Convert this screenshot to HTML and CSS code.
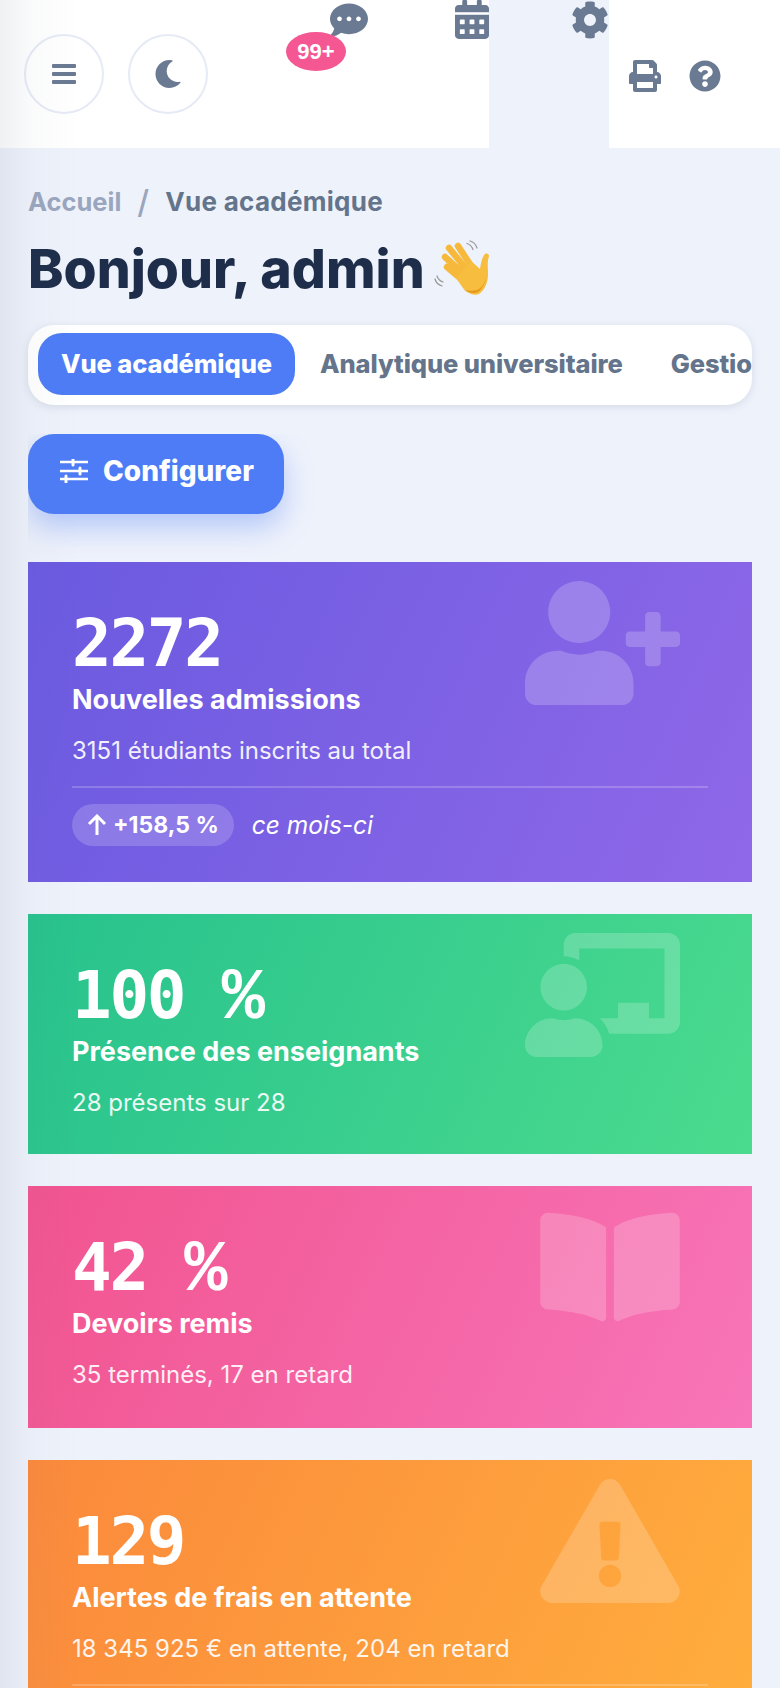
FILE: index.html
```html
<!DOCTYPE html>
<html lang="fr">
<head>
    <meta charset="UTF-8">
    <meta name="viewport" content="width=device-width, initial-scale=1.0">
    <title>Vue académique</title>
    <link rel="stylesheet" href="styles.css">
</head>
<body>
    <div class="edge-shadow"></div>
    <header class="topbar">
        <button class="round-btn first" aria-label="Menu">
            <svg class="bars" viewBox="0 0 24 20"><rect y="0" width="24" height="4" rx="1"/><rect y="8" width="24" height="4" rx="1"/><rect y="16" width="24" height="4" rx="1"/></svg>
        </button>
        <button class="round-btn" aria-label="Mode sombre">
            <svg class="moon" viewBox="0 0 512 512"><path d="M283.211 512c78.962 0 151.079-35.925 198.857-94.792 7.068-8.708-.639-21.43-11.562-19.35-124.203 23.654-238.262-71.576-238.262-196.954 0-72.222 38.662-138.635 101.498-174.394 9.686-5.512 7.25-20.197-3.756-22.23A258.156 258.156 0 0 0 283.211 0c-141.309 0-256 114.511-256 256 0 141.309 114.511 256 256 256z"/></svg>
        </button>
        <div class="chat">
            <svg class="chat-icon" viewBox="0 0 512 512"><path d="M256 32C114.6 32 0 125.1 0 240c0 49.6 21.4 95 57 130.7C44.5 421.1 2.7 466 2.2 466.5c-2.2 2.3-2.8 5.7-1.5 8.7S4.8 480 8 480c66.3 0 116-31.8 140.6-51.4 32.7 12.3 69 19.4 107.4 19.4 141.4 0 256-93.1 256-208S397.4 32 256 32zM128 272c-17.7 0-32-14.3-32-32s14.3-32 32-32 32 14.3 32 32-14.3 32-32 32zm128 0c-17.7 0-32-14.3-32-32s14.3-32 32-32 32 14.3 32 32-14.3 32-32 32zm128 0c-17.7 0-32-14.3-32-32s14.3-32 32-32 32 14.3 32 32-14.3 32-32 32z"/></svg>
            <span class="badge">99+</span>
        </div>
        <svg class="calendar" viewBox="0 0 448 512"><path d="M0 464c0 26.5 21.5 48 48 48h352c26.5 0 48-21.5 48-48V192H0v272zm320-196c0-6.6 5.4-12 12-12h40c6.6 0 12 5.4 12 12v40c0 6.6-5.4 12-12 12h-40c-6.6 0-12-5.4-12-12v-40zm0 128c0-6.6 5.4-12 12-12h40c6.6 0 12 5.4 12 12v40c0 6.6-5.4 12-12 12h-40c-6.6 0-12-5.4-12-12v-40zM192 268c0-6.6 5.4-12 12-12h40c6.6 0 12 5.4 12 12v40c0 6.6-5.4 12-12 12h-40c-6.6 0-12-5.4-12-12v-40zm0 128c0-6.6 5.4-12 12-12h40c6.6 0 12 5.4 12 12v40c0 6.6-5.4 12-12 12h-40c-6.6 0-12-5.4-12-12v-40zM64 268c0-6.6 5.4-12 12-12h40c6.6 0 12 5.4 12 12v40c0 6.6-5.4 12-12 12H76c-6.6 0-12-5.4-12-12v-40zm0 128c0-6.6 5.4-12 12-12h40c6.6 0 12 5.4 12 12v40c0 6.6-5.4 12-12 12H76c-6.6 0-12-5.4-12-12v-40zM400 64h-48V16c0-8.8-7.2-16-16-16h-32c-8.8 0-16 7.2-16 16v48H160V16c0-8.8-7.2-16-16-16h-32c-8.8 0-16 7.2-16 16v48H48C21.5 64 0 85.5 0 112v48h448v-48c0-26.5-21.5-48-48-48z"/></svg>
        <div class="settings">
            <svg class="cog" viewBox="0 0 512 512"><path d="M487.4 315.7l-42.6-24.6c4.3-23.2 4.3-47 0-70.2l42.6-24.6c4.9-2.8 7.1-8.6 5.5-14-11.1-35.6-30-67.8-54.7-94.6-3.8-4.1-10-5.1-14.8-2.3L380.8 110c-17.9-15.4-38.5-27.3-60.8-35.1V25.8c0-5.6-3.9-10.5-9.4-11.7-36.7-8.2-74.3-7.8-109.2 0-5.5 1.2-9.4 6.1-9.4 11.7V75c-22.2 7.9-42.8 19.8-60.8 35.1L88.7 85.5c-4.9-2.8-11-1.9-14.8 2.3-24.7 26.7-43.6 58.9-54.7 94.6-1.7 5.4.6 11.2 5.5 14L67.3 221c-4.3 23.2-4.3 47 0 70.2l-42.6 24.6c-4.9 2.8-7.1 8.6-5.5 14 11.1 35.6 30 67.8 54.7 94.6 3.8 4.1 10 5.1 14.8 2.3l42.6-24.6c17.9 15.4 38.5 27.3 60.8 35.1v49.2c0 5.6 3.9 10.5 9.4 11.7 36.7 8.2 74.3 7.8 109.2 0 5.5-1.2 9.4-6.1 9.4-11.7v-49.2c22.2-7.9 42.8-19.8 60.8-35.1l42.6 24.6c4.9 2.8 11 1.9 14.8-2.3 24.7-26.7 43.6-58.9 54.7-94.6 1.5-5.5-.7-11.3-5.6-14.1zM256 336c-44.1 0-80-35.9-80-80s35.9-80 80-80 80 35.9 80 80-35.9 80-80 80z"/></svg>
        </div>
        <svg class="print" viewBox="0 0 512 512"><path d="M448 192V77.25c0-8.49-3.37-16.62-9.37-22.63L393.37 9.37c-6-6-14.14-9.37-22.63-9.37H96C78.33 0 64 14.33 64 32v160c-35.35 0-64 28.65-64 64v112c0 8.84 7.16 16 16 16h48v96c0 17.67 14.33 32 32 32h320c17.67 0 32-14.33 32-32v-96h48c8.84 0 16-7.16 16-16V256c0-35.35-28.65-64-64-64zm-64 256H128v-96h256v96zm0-224H128V64h192v48c0 8.84 7.16 16 16 16h48v96zm48 72c-13.25 0-24-10.75-24-24 0-13.26 10.75-24 24-24s24 10.74 24 24c0 13.25-10.75 24-24 24z"/></svg>
        <svg class="help" viewBox="0 0 512 512"><path d="M504 256c0 136.997-111.043 248-248 248S8 392.997 8 256C8 119.083 119.043 8 256 8s248 111.083 248 248zM262.655 90c-54.497 0-89.255 22.957-116.549 63.758-3.536 5.286-2.353 12.415 2.715 16.258l34.699 26.31c5.205 3.947 12.621 3.008 16.665-2.122 17.864-22.658 30.113-35.797 57.303-35.797 20.429 0 45.698 13.148 45.698 32.958 0 14.976-12.363 22.667-32.534 33.976C247.128 238.528 216 254.941 216 296v4c0 6.627 5.373 12 12 12h56c6.627 0 12-5.373 12-12v-1.333c0-28.462 83.186-29.647 83.186-106.667 0-58.002-60.165-102-116.531-102zM256 338c-25.365 0-46 20.635-46 46 0 25.364 20.635 46 46 46s46-20.636 46-46c0-25.365-20.635-46-46-46z"/></svg>
    </header>

    <main class="content">
        <nav class="breadcrumb">
            <span class="crumb-home">Accueil</span>
            <span class="crumb-sep">/</span>
            <span class="crumb-current">Vue académique</span>
        </nav>
        <h1 class="greeting">Bonjour, admin
            <svg class="wave" viewBox="0 0 60 56">
                <path d="M33 3.5c3 1 5 3 6 6M36 1c3.500 1 6 3.500 7 7" fill="none" stroke="#9a9a9a" stroke-width="1.300" stroke-linecap="round"/>
                <path d="M3 36c1 3 3 5 6 6M1 39c1 3.500 3.500 6 7 7" fill="none" stroke="#9a9a9a" stroke-width="1.300" stroke-linecap="round"/>
                <g fill="none" stroke="#f6b93b" stroke-width="6.500" stroke-linecap="round">
                    <path d="M13 27l19 16"/>
                    <path d="M11 17l23 21"/>
                    <path d="M15 8l22 27"/>
                    <path d="M24 6l17 26"/>
                </g>
                <path d="M22 38l15-17 9 8c1-6 2-12 5-15 2-1 4 0 4 2-2 6-1 12-1 18 0 8-3 16-9 20-6 2-12-1-16-6z" fill="#f7bd3e"/>
                <path d="M30 50c5 3 10 4 14 2 5-4 8-10 9-18-1 8-5 14-10 16-4 1-9 1-13 0z" fill="#e59a1c"/>
            </svg>
        </h1>

        <div class="tabs">
            <span class="tab active">Vue académique</span>
            <span class="tab">Analytique universitaire</span>
            <span class="tab">Gestion financière</span>
        </div>

        <div class="config-wrap">
            <button class="config-btn">
                <svg class="sliders" viewBox="0 0 28 24"><path d="M0 3h28M0 12h28M0 20h28" stroke="#fff" stroke-width="2.600"/><path d="M13 0v6M20 9v6M6 17v6" stroke="#fff" stroke-width="3" stroke-linecap="round"/></svg>
                Configurer
            </button>
        </div>

        <section class="stat-card purple">
            <svg class="card-icon" viewBox="0 0 640 512"><path d="M624 208h-64v-64c0-8.800-7.200-16-16-16h-32c-8.800 0-16 7.200-16 16v64h-64c-8.800 0-16 7.200-16 16v32c0 8.800 7.200 16 16 16h64v64c0 8.800 7.200 16 16 16h32c8.800 0 16-7.200 16-16v-64h64c8.800 0 16-7.200 16-16v-32c0-8.800-7.200-16-16-16zm-400 48c70.700 0 128-57.300 128-128S294.700 0 224 0 96 57.300 96 128s57.300 128 128 128zm89.600 32h-16.700c-22.200 10.200-46.900 16-72.900 16s-50.600-5.800-72.900-16h-16.700C60.200 288 0 348.200 0 422.400V464c0 26.500 21.500 48 48 48h352c26.500 0 48-21.500 48-48v-41.600c0-74.200-60.200-134.400-134.400-134.400z"/></svg>
            <div class="stat-value">2272</div>
            <div class="stat-label">Nouvelles admissions</div>
            <div class="stat-sub">3151 étudiants inscrits au total</div>
            <div class="stat-foot">
                <span class="trend">
                    <svg class="arrow" viewBox="0 0 20 22"><path d="M10 21V2M2 10l8-8 8 8" fill="none" stroke="#fff" stroke-width="3"/></svg>
                    +158,5 %
                </span>
                <em class="trend-note">ce mois-ci</em>
            </div>
        </section>

        <section class="stat-card green">
            <svg class="card-icon" viewBox="0 0 640 512"><path d="M208 352c-2.390 0-4.780.350-7.060 1.090C187.980 357.300 174.350 360 160 360c-14.350 0-27.980-2.700-40.950-6.910-2.280-.740-4.660-1.090-7.050-1.090C49.940 352-.330 402.480 0 464.620.140 490.880 21.730 512 48 512h224c26.270 0 47.860-21.120 48-47.380.330-62.140-49.940-112.620-112-112.620zm-48-32c53.020 0 96-42.980 96-96s-42.980-96-96-96-96 42.980-96 96 42.980 96 96 96zM592 0H208c-26.470 0-48 22.250-48 49.590V96c23.420 0 45.100 6.780 64 17.800V64h352v288h-64v-64H384v64h-76.240c19.100 16.690 33.120 38.730 39.690 64H592c26.470 0 48-22.250 48-49.590V49.590C640 22.250 618.470 0 592 0z"/></svg>
            <div class="stat-value">100 <span class="pct">%</span></div>
            <div class="stat-label">Présence des enseignants</div>
            <div class="stat-sub">28 présents sur 28</div>
        </section>

        <section class="stat-card pink">
            <svg class="card-icon narrow" viewBox="0 0 576 512"><path d="M542.220 32.050c-54.800 3.110-163.720 14.430-230.960 55.590-4.640 2.840-7.270 7.890-7.270 13.170v363.870c0 11.550 12.630 18.850 23.280 13.490 69.180-34.820 169.230-44.320 218.700-46.920 16.890-.890 30.020-14.430 30.020-30.660V62.750c.010-17.710-15.350-31.740-33.770-30.700zM264.730 87.640C197.500 46.480 88.580 35.170 33.780 32.050 15.360 31.010 0 45.040 0 62.750V400.600c0 16.240 13.130 29.780 30.020 30.660 49.490 2.600 149.590 12.110 218.770 46.950 10.620 5.350 23.210-1.940 23.210-13.460V100.630c0-5.290-2.620-10.150-7.270-12.990z"/></svg>
            <div class="stat-value">42 <span class="pct">%</span></div>
            <div class="stat-label">Devoirs remis</div>
            <div class="stat-sub">35 terminés, 17 en retard</div>
        </section>

        <section class="stat-card orange">
            <svg class="card-icon narrow" viewBox="0 0 576 512"><path d="M569.517 440.013C587.975 472.007 564.806 512 527.940 512H48.054c-36.937 0-59.999-40.055-41.577-71.987L246.423 24.035c18.467-32.009 64.720-31.951 83.154 0l239.940 416.978zM288 354c-25.405 0-46 20.595-46 46s20.595 46 46 46 46-20.595 46-46-20.595-46-46-46zm-43.673-165.346l7.418 136c.347 6.364 5.609 11.346 11.982 11.346h48.546c6.373 0 11.635-4.982 11.982-11.346l7.418-136c.375-6.874-5.098-12.654-11.982-12.654h-63.383c-6.884 0-12.356 5.780-11.981 12.654z"/></svg>
            <div class="stat-value">129</div>
            <div class="stat-label">Alertes de frais en attente</div>
            <div class="stat-sub">18 345 925 € en attente, 204 en retard</div>
            <div class="stat-foot"></div>
        </section>
    </main>
</body>
</html>
```
FILE: styles.css
```css
* {
    margin: 0;
    padding: 0;
    box-sizing: border-box;
}
html, body {
    height: 1688px;
    overflow: hidden;
}
body {
    position: relative;
    font-family: Inter, "Liberation Sans", sans-serif;
    background-color: #eef2fb;
}
svg {
    display: block;
    fill: #6b7a93;
    flex-shrink: 0;
}
.edge-shadow {
    position: absolute;
    top: 0;
    left: 0;
    bottom: 0;
    width: 80px;
    background: linear-gradient(to right, rgba(100, 116, 139, 0.1), rgba(100, 116, 139, 0.03) 40%, rgba(100, 116, 139, 0));
    pointer-events: none;
    z-index: 5;
}

/* top bar */
.topbar {
    display: flex;
    height: 148px;
    background-color: #fff;
}
.round-btn {
    width: 80px;
    height: 80px;
    margin-top: 34px;
    margin-left: 24px;
    display: flex;
    align-items: center;
    justify-content: center;
    background: #fff;
    border: 2px solid #e5eaf5;
    border-radius: 50%;
}
.bars {
    width: 24px;
    height: 20px;
}
.moon {
    width: 28px;
    height: 28px;
}
.chat {
    position: relative;
    width: 38px;
    height: 38px;
    margin-top: 1px;
    margin-left: 122px;
}
.chat-icon {
    width: 38px;
    height: 38px;
}
.badge {
    position: absolute;
    top: 31px;
    left: -44px;
    width: 60px;
    height: 39px;
    border-radius: 50%;
    display: flex;
    align-items: center;
    justify-content: center;
    background-color: #f45792;
    color: #fff;
    font-family: "Liberation Sans", sans-serif;
    font-size: 22px;
    font-weight: 700;
}
.calendar {
    width: 34px;
    height: 39px;
    margin-left: 87px;
}
.settings {
    width: 120px;
    height: 148px;
    padding-left: 82px;
    background-color: #eef2fb;
}
.cog {
    width: 38px;
    height: 38px;
    margin-top: 1px;
}
.print {
    width: 32px;
    height: 32px;
    margin-top: 60px;
    margin-left: 20px;
}
.help {
    width: 32px;
    height: 32px;
    margin-top: 60px;
    margin-left: 28px;
}

/* page content */
.content {
    padding: 0 28px;
}
.breadcrumb {
    display: flex;
    align-items: center;
    height: 40px;
    margin-top: 33px;
    font-size: 26px;
    font-weight: 700;
}
.crumb-home {
    color: #9aa6bd;
    font-size: 25.5px;
}
.crumb-sep {
    margin: 0 16px;
    color: #9aa6bd;
    font-size: 32px;
    font-weight: 500;
}
.crumb-current {
    color: #64748b;
    letter-spacing: 0.3px;
}
.greeting {
    display: flex;
    align-items: center;
    gap: 9px;
    height: 62px;
    margin-top: 16px;
    color: #1e2d4a;
    font-size: 53.5px;
    font-weight: 800;
    white-space: nowrap;
}
.wave {
    width: 60px;
    height: 56px;
}
.tabs {
    display: flex;
    gap: 2px;
    height: 80px;
    margin-top: 26px;
    padding: 8px 0 8px 10px;
    overflow: hidden;
    white-space: nowrap;
    background-color: #fff;
    border-radius: 26px;
    box-shadow: 0 2px 8px rgba(100, 116, 139, 0.18);
}
.tab {
    display: flex;
    align-items: center;
    height: 62px;
    padding: 0 23px 2px;
    color: #64748b;
    font-size: 25.5px;
    font-weight: 800;
    letter-spacing: -0.1px;
}
.tab.active {
    padding: 0 23px 2px;
    color: #fff;
    background-color: #4d7cf6;
    border-radius: 24px;
}
.config-wrap {
    margin-top: 29px;
    clip-path: inset(0 -100px -60px 0);
}
.config-btn {
    display: flex;
    align-items: center;
    gap: 15px;
    width: 256px;
    height: 80px;
    padding-left: 32px;
    padding-bottom: 6px;
    border: none;
    border-radius: 26px;
    color: #fff;
    background-color: #4d7cf6;
    font-family: inherit;
    font-size: 28px;
    font-weight: 800;
    box-shadow: 0 14px 28px rgba(77, 124, 246, 0.35);
}
.sliders {
    width: 28px;
    height: 24px;
}

/* stat cards */
.stat-card {
    position: relative;
    margin-top: 32px;
    padding: 44px 44px 0;
    color: #fff;
    overflow: hidden;
}
.config-wrap + .stat-card {
    margin-top: 48px;
}
.stat-card.purple {
    height: 320px;
    background: linear-gradient(115deg, #6a5ae0, #8f68e8);
}
.stat-card.green {
    height: 240px;
    background: linear-gradient(115deg, #27c28d, #4bdb8e);
}
.stat-card.pink {
    height: 242px;
    background: linear-gradient(115deg, #f1548f, #f875b9);
}
.stat-card.orange {
    height: 228px;
    background: linear-gradient(115deg, #fb893c, #ffad3d);
}
.card-icon {
    position: absolute;
    top: 19px;
    right: 72px;
    width: 155px;
    height: 124px;
    fill: rgba(255, 255, 255, 0.2);
}
.card-icon.narrow {
    width: 140px;
}
.stat-value {
    height: 70px;
    font-family: "DejaVu Sans Mono", monospace;
    font-size: 66px;
    font-weight: 700;
    line-height: 76px;
    letter-spacing: -2.3px;
    white-space: pre;
}
.pct {
    font-family: "Liberation Mono", monospace;
    font-size: 72px;
    letter-spacing: 0;
}
.stat-label {
    margin-top: 6px;
    font-size: 27px;
    font-weight: 700;
    line-height: 36px;
}
.stat-sub {
    margin-top: 16px;
    font-size: 24px;
    line-height: 34px;
    opacity: 0.9;
}
.stat-foot {
    display: flex;
    align-items: center;
    gap: 18px;
    margin-top: 18px;
    padding-top: 16px;
    border-top: 2px solid rgba(255, 255, 255, 0.2);
}
.trend {
    display: flex;
    align-items: center;
    gap: 6px;
    height: 42px;
    padding: 0 15px;
    border-radius: 21px;
    background-color: rgba(255, 255, 255, 0.18);
    font-size: 23px;
    font-weight: 700;
}
.arrow {
    width: 20px;
    height: 22px;
}
.trend-note {
    font-size: 24.5px;
}
```
